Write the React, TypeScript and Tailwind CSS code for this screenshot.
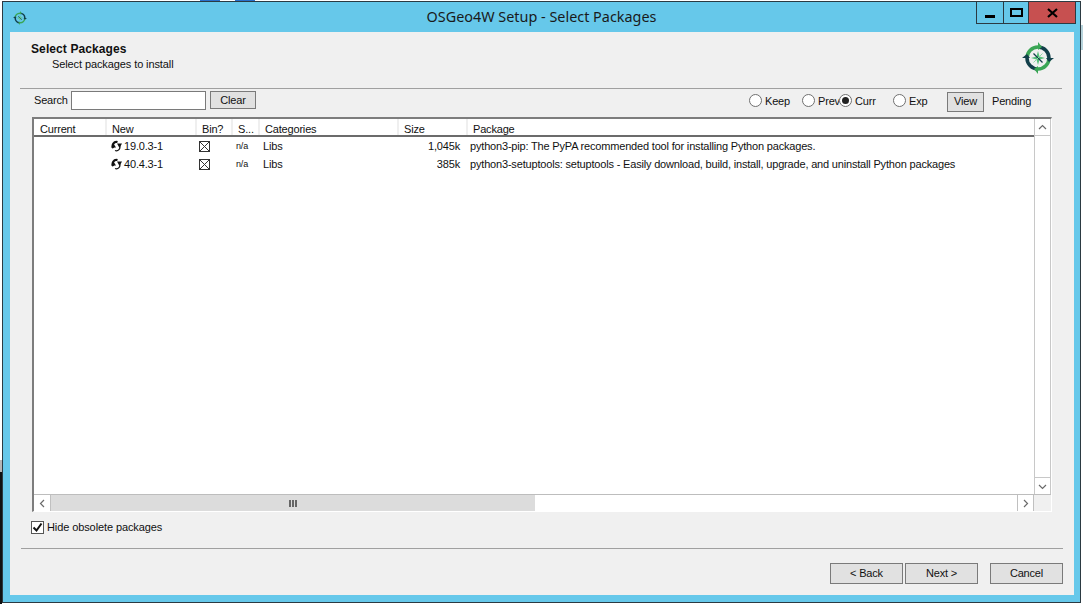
const rows = [
  { ver: '19.0.3-1', size: '1,045k', pkg: 'python3-pip: The PyPA recommended tool for installing Python packages.' },
  { ver: '40.4.3-1', size: '385k', pkg: 'python3-setuptools: setuptools - Easily download, build, install, upgrade, and uninstall Python packages' },
]

const headers = [
  { label: 'Current', cls: 'w-[73px]' },
  { label: 'New', cls: 'w-[90px]' },
  { label: 'Bin?', cls: 'w-[36px]' },
  { label: 'S...', cls: 'w-[27px]' },
  { label: 'Categories', cls: 'w-[139px]' },
  { label: 'Size', cls: 'w-[69px]' },
  { label: 'Package', cls: 'flex-1' },
]

function Logo({ size }: { size: number }) {
  return (
    <svg width={size} height={size} viewBox="0 0 32 32" fill="none">
      <path d="M16 5a11 11 0 0 0-11 11" stroke="#3aa655" strokeWidth="3.5" />
      <path d="M16 27a11 11 0 0 0 11-11" stroke="#3aa655" strokeWidth="3.5" />
      <path d="M16 5a11 11 0 0 1 11 11" stroke="#123f4a" strokeWidth="3.5" />
      <path d="M16 27a11 11 0 0 1-11-11" stroke="#123f4a" strokeWidth="3.5" />
      <path d="M16 0l4 5-4 3z" fill="#3aa655" />
      <path d="M16 32l-4-5 4-3z" fill="#3aa655" />
      <path d="M32 16l-5 4-3-4z" fill="#123f4a" />
      <path d="M0 16l5-4 3 4z" fill="#123f4a" />
      <path d="M16 9l1.5 5.5L23 16l-5.5 1.5L16 23l-1.5-5.5L9 16l5.5-1.5z" fill="#55c07a" />
      <path d="M11.5 11.5l9 9" stroke="#123f4a" strokeWidth="1.3" />
      <path d="M20.5 11.5l-9 9" stroke="#8fd8a8" strokeWidth="1" />
    </svg>
  )
}

// значок "будет установлено": два треугольника на кольце
function CycleIcon() {
  return (
    <svg width="11" height="12" viewBox="0 0 11 12" fill="none" className="shrink-0">
      <path d="M2.5 8A3.8 3.8 0 0 1 6.5 2" stroke="#111" strokeWidth="2.2" />
      <path d="M8.5 5.5A3.6 3.6 0 0 1 4 10.5" stroke="#111" strokeWidth="1.2" />
      <path d="M0 7.5h5L2.5 3.5zM6 3.5h5L8.5 8z" fill="#111" />
    </svg>
  )
}

function Radio({ label, checked, cls }: { label: string; checked?: boolean; cls: string }) {
  return (
    <div className={`flex items-center ${cls}`}>
      <span className="relative z-10 flex h-[13px] w-[13px] shrink-0 items-center justify-center rounded-full border border-[#707070] bg-white">
        {checked && <span className="h-[7px] w-[7px] rounded-full bg-[#222]" />}
      </span>
      <span className="ml-[3px] mt-[3px] whitespace-nowrap">{label}</span>
    </div>
  )
}

function Btn({ label, cls }: { label: string; cls: string }) {
  return (
    <div className={`flex items-center justify-center border border-[#7a7a7a] bg-[#e1e1e1] ${cls}`}>
      {label}
    </div>
  )
}

function Chevron({ d }: { d: string }) {
  return (
    <svg width="9" height="9" viewBox="0 0 9 9" fill="none">
      <path d={d} stroke="#6a6a6a" strokeWidth="1.2" />
    </svg>
  )
}

export default function App() {
  return (
    <div className="relative h-[604px] w-[1083px] overflow-hidden bg-white pl-[2px] pt-px font-['Liberation_Sans',sans-serif] text-[11px] tracking-[-0.18px] text-[#111]">
      {/* то, что видно за окном */}
      <div className="absolute left-0 top-[460px] h-[12px] w-[2px] bg-[#b5b5b5]" />
      <div className="absolute left-0 top-[472px] h-[132px] w-[2px] bg-[#111]" />
      <div className="absolute left-[200px] top-0 h-px w-[20px] bg-[#2a6fc9]" />
      <div className="absolute left-[235px] top-0 h-px w-[20px] bg-[#2a6fc9]" />
      <div className="absolute right-0 top-[25px] h-[25px] w-[2px] bg-[#b8d4dc]" />

      {/* окно */}
      <div className="flex h-[602px] w-[1079px] flex-col border border-[#2b3a42] bg-[#66c8ea]">
        <div className="relative flex h-[30px] shrink-0 items-center justify-center font-['Noto_Sans',sans-serif] text-[14.4px] tracking-normal text-[#1a1a1a]">
          <div className="absolute left-[10px] top-[9px]">
            <Logo size={14} />
          </div>
          <span>OSGeo4W Setup - Select Packages</span>
          <div className="absolute right-[4px] top-0 flex h-[22px] border border-t-0 border-[#2b3a42]">
            <div className="flex w-[27px] items-end justify-center border-r border-[#2b3a42] pb-[5px]">
              <div className="h-[3px] w-[10px] bg-black" />
            </div>
            <div className="flex w-[25px] items-center justify-center border-r border-[#2b3a42]">
              <div className="h-[9px] w-[13px] border-2 border-black" />
            </div>
            <div className="flex w-[46px] items-center justify-center bg-[#c75050]">
              <svg width="11" height="10" viewBox="0 0 11 10">
                <path d="M1 1l9 8M10 1L1 9" stroke="#000" strokeWidth="2.2" />
              </svg>
            </div>
          </div>
        </div>

        <div className="ml-[7px] mr-[6px] flex h-[563px] flex-col bg-[#f0f0f0]">
          {/* заголовок */}
          <div className="relative ml-[10px] mr-[12px] h-[57px] shrink-0 border-b border-[#a0a0a0]">
            <div className="pl-[11px] pt-[10px] text-[12px] font-bold leading-[14px] tracking-[0.1px]">Select Packages</div>
            <div className="pl-[32px] pt-px text-[11px] leading-[15px] tracking-[-0.1px]">Select packages to install</div>
            <div className="absolute right-[8px] top-[10px]">
              <Logo size={32} />
            </div>
          </div>

          {/* поиск и фильтры */}
          <div className="ml-[24px] mr-[43px] flex h-[22px] items-center">
            <span className="w-[37px]">Search</span>
            <div className="h-[19px] w-[135px] border border-[#7a7a7a] bg-white" />
            <Btn label="Clear" cls="ml-[4px] h-[18px] w-[46px]" />
            <div className="ml-auto flex items-center">
              <Radio label="Keep" cls="w-[53px]" />
              <Radio label="Prev" cls="w-[37px]" />
              <Radio label="Curr" checked cls="w-[54px]" />
              <Radio label="Exp" cls="w-[54px]" />
              <Btn label="View" cls="mt-[3px] h-[20px] w-[37px]" />
              <span className="ml-[8px] mt-[3px] w-[39px]">Pending</span>
            </div>
          </div>

          {/* список пакетов */}
          <div className="ml-[22px] mr-[22px] mt-[6px] flex h-[395px] flex-col border-2 border-b-[1px] border-r-[1px] border-[#7d7d7d] border-b-[#fff] border-r-[#fff] bg-white">
            <div className="flex min-h-0 flex-1">
              <div className="flex min-w-0 flex-1 flex-col">
                <div className="flex h-[18px] shrink-0 items-center border-b-2 border-[#6b6b6b]">
                  {headers.map((h) => (
                    <div key={h.label} className={`flex h-full items-center border-r-2 border-[#efefef] pl-[5px] pt-[4px] first:pl-[6px] last:border-r-0 ${h.cls}`}>
                      {h.label}
                    </div>
                  ))}
                </div>
                {rows.map((r) => (
                  <div key={r.ver} className="flex h-[18px] shrink-0 items-center">
                    <div className="w-[73px]" />
                    <div className="flex w-[90px] items-center pl-[4px]">
                      <CycleIcon />
                      <span className="ml-[2px]">{r.ver}</span>
                    </div>
                    <div className="w-[36px] pl-[2px]">
                      <div className="relative h-[11px] w-[11px] border border-[#333]">
                        <svg width="9" height="9" viewBox="0 0 9 9" className="absolute left-0 top-0">
                          <path d="M0 0l9 9M9 0L0 9" stroke="#333" strokeWidth="1" />
                        </svg>
                      </div>
                    </div>
                    <div className="w-[27px] pl-[3px] pt-px text-[9px]">n/a</div>
                    <div className="w-[139px] pl-[3px]">Libs</div>
                    <div className="w-[61px] text-right">{r.size}</div>
                    <div className="ml-[10px] whitespace-nowrap">{r.pkg}</div>
                  </div>
                ))}
              </div>
              <div className="flex w-[17px] shrink-0 flex-col justify-between border-x border-[#c8c8c8] bg-white">
                <div className="flex h-[17px] items-center justify-center border-b border-[#c8c8c8]">
                  <Chevron d="M1 6l3.5-3.5L8 6" />
                </div>
                <div className="flex h-[17px] items-center justify-center border-t border-[#c8c8c8]">
                  <Chevron d="M1 3l3.5 3.5L8 3" />
                </div>
              </div>
            </div>
            <div className="flex h-[17px] shrink-0 border-t border-[#bdbdbd]">
              <div className="flex w-[17px] items-center justify-center border-r border-[#c0c0c0]">
                <Chevron d="M6 1L2.5 4.5 6 8" />
              </div>
              <div className="flex w-[484px] items-center justify-center gap-px bg-[#dcdcdc]">
                <div className="h-[7px] w-[2px] bg-[#666]" />
                <div className="h-[7px] w-[2px] bg-[#666]" />
                <div className="h-[7px] w-[2px] bg-[#666]" />
              </div>
              <div className="flex-1" />
              <div className="flex w-[17px] items-center justify-center border-x border-[#c0c0c0]">
                <Chevron d="M3 1l3.5 3.5L3 8" />
              </div>
              <div className="w-[17px] bg-[#f0f0f0]" />
            </div>
          </div>

          {/* низ окна */}
          <div className="ml-[21px] mt-[6px] flex h-[18px] items-center">
            <div className="flex h-[13px] w-[13px] items-center justify-center border border-[#555] bg-white">
              <svg width="11" height="11" viewBox="0 0 11 11" fill="none">
                <path d="M1.5 5.5l3 3 5-7" stroke="#111" strokeWidth="2" />
              </svg>
            </div>
            <span className="ml-[3px] tracking-[-0.1px]">Hide obsolete packages</span>
          </div>
          <div className="ml-[11px] mr-[11px] mt-[12px] h-px bg-[#a0a0a0]" />
          <div className="mr-[11px] mt-[14px] flex justify-end">
            <Btn label="< Back" cls="h-[21px] w-[73px]" />
            <Btn label="Next >" cls="ml-[2px] h-[21px] w-[73px] border-[#3f77a8]" />
            <Btn label="Cancel" cls="ml-[12px] h-[21px] w-[73px]" />
          </div>
        </div>
      </div>
    </div>
  )
}
